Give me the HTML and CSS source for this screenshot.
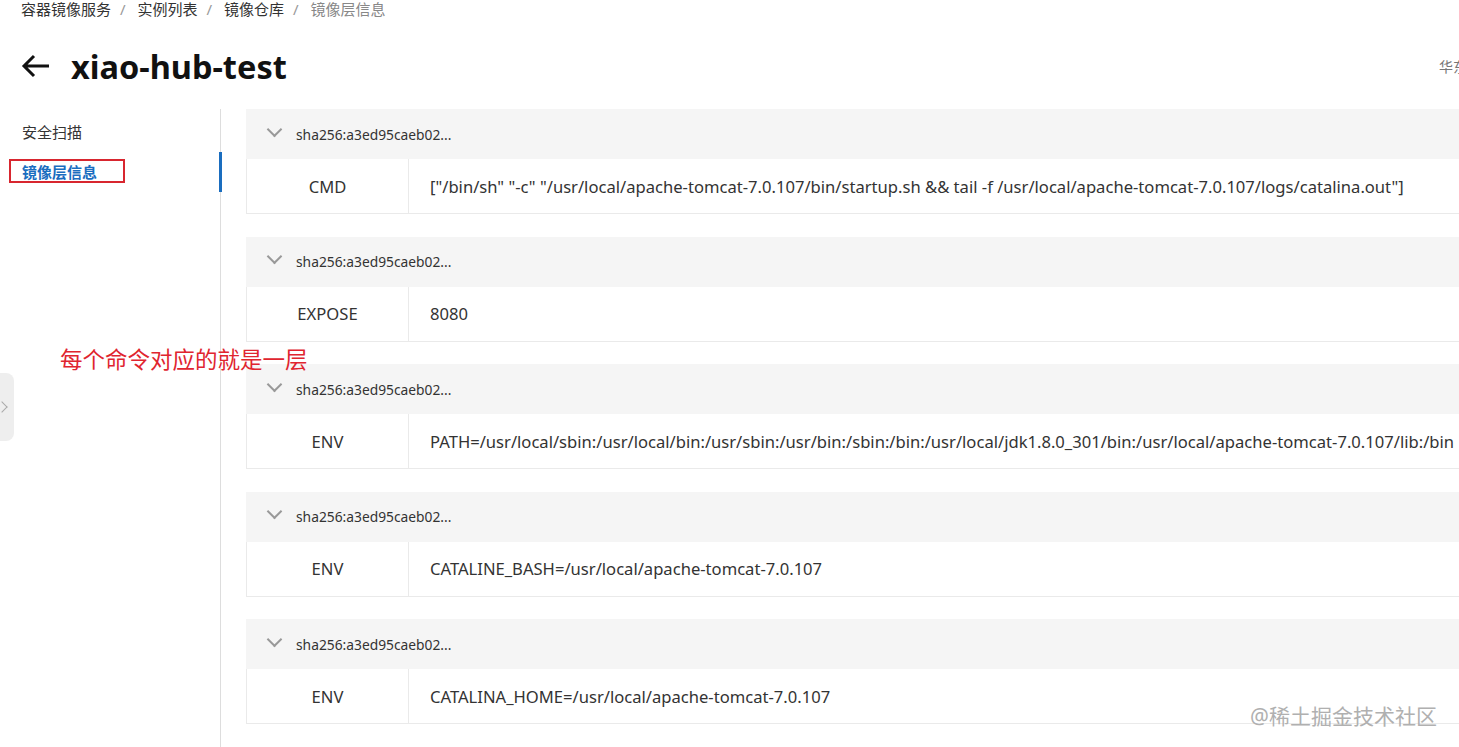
FILE: index.html
```html
<!DOCTYPE html>
<html>
<head>
  <title>镜像层信息</title>
  <link rel="stylesheet" href="styles.css">
</head>
<body>
  <div class="page">
    <div class="breadcrumb">
      <span>容器镜像服务</span><span class="sep">/</span>
      <span>实例列表</span><span class="sep">/</span>
      <span>镜像仓库</span><span class="sep">/</span>
      <span class="current">镜像层信息</span>
    </div>

    <div class="title-row">
      <svg class="back" width="30" height="24" viewBox="0 0 30 24">
        <path d="M28 12H3M13 2L3 12l10 10" fill="none" stroke="#111" stroke-width="3"/>
      </svg>
      <h1>xiao-hub-test</h1>
      <span class="region">华东</span>
    </div>

    <div class="layout">
      <div class="sidebar">
        <div class="nav-item">安全扫描</div>
        <div class="nav-item active"><span class="mark">镜像层信息</span></div>
      </div>

      <div class="content">
        <div class="layer">
          <div class="layer-head"><span class="chev"></span>sha256:a3ed95caeb02...</div>
          <div class="layer-row">
            <div class="key">CMD</div>
            <div class="val">["/bin/sh" "-c" "/usr/local/apache-tomcat-7.0.107/bin/startup.sh &amp;&amp; tail -f /usr/local/apache-tomcat-7.0.107/logs/catalina.out"]</div>
          </div>
        </div>
        <div class="layer">
          <div class="layer-head"><span class="chev"></span>sha256:a3ed95caeb02...</div>
          <div class="layer-row">
            <div class="key">EXPOSE</div>
            <div class="val">8080</div>
          </div>
        </div>
        <div class="layer">
          <div class="layer-head"><span class="chev"></span>sha256:a3ed95caeb02...</div>
          <div class="layer-row">
            <div class="key">ENV</div>
            <div class="val">PATH=/usr/local/sbin:/usr/local/bin:/usr/sbin:/usr/bin:/sbin:/bin:/usr/local/jdk1.8.0_301/bin:/usr/local/apache-tomcat-7.0.107/lib:/bin</div>
          </div>
        </div>
        <div class="layer">
          <div class="layer-head"><span class="chev"></span>sha256:a3ed95caeb02...</div>
          <div class="layer-row">
            <div class="key">ENV</div>
            <div class="val">CATALINE_BASH=/usr/local/apache-tomcat-7.0.107</div>
          </div>
        </div>
        <div class="layer">
          <div class="layer-head"><span class="chev"></span>sha256:a3ed95caeb02...</div>
          <div class="layer-row">
            <div class="key">ENV</div>
            <div class="val">CATALINA_HOME=/usr/local/apache-tomcat-7.0.107</div>
          </div>
        </div>
        <div class="layer">
          <div class="layer-head"><span class="chev"></span>sha256:a3ed95caeb02...</div>
        </div>
      </div>
    </div>
  </div>

  <div class="note">每个命令对应的就是一层</div>
  <div class="side-tab"><span></span></div>
  <div class="watermark">@稀土掘金技术社区</div>
</body>
</html>
```

FILE: styles.css
```css
html, body {
  margin: 0;
  padding: 0;
  height: 100%;
  overflow: hidden;
  background: #fff;
}

body {
  font-family: "Noto Sans", "Noto Sans CJK SC", sans-serif;
  color: #333;
}

.page {
  width: 1560px;
}

.breadcrumb {
  padding-left: 21px;
  font-size: 15px;
  line-height: 18px;
  color: #333;
}

.breadcrumb .sep {
  color: #999;
  margin: 0 8px 0 9px;
}

.breadcrumb .current {
  color: #888;
}

.title-row {
  display: flex;
  align-items: center;
  height: 80px;
  padding-top: 8px;
  padding-left: 21px;
  width: 1438px;
}

.back {
  margin-right: 20px;
}

.title-row h1 {
  margin: 0;
  font-size: 32.5px;
  font-weight: 700;
  color: #111;
  flex: 1;
}

.region {
  font-size: 14px;
  color: #777;
  margin-right: -8px;
}

.layout {
  display: flex;
  margin-top: 3px;
}

.sidebar {
  width: 221px;
  border-right: 1px solid #ddd;
  min-height: 700px;
  padding-top: 3px;
  box-sizing: border-box;
}

.nav-item {
  position: relative;
  font-size: 15px;
  line-height: 40px;
  padding-left: 22px;
}

.nav-item.active {
  color: #1a6dbf;
  font-weight: 700;
}

.nav-item.active::after {
  content: "";
  position: absolute;
  right: -2px;
  top: 0;
  width: 3px;
  height: 40px;
  background: #1a6dbf;
}

.mark {
  position: relative;
}

.mark::before {
  content: "";
  position: absolute;
  left: -13px;
  top: -3px;
  width: 112px;
  height: 20px;
  border: 2px solid #d8262f;
}

.content {
  margin-left: 25px;
  flex: 1;
}

.layer {
  margin-bottom: 22.5px;
}

.layer-head {
  display: flex;
  align-items: center;
  height: 50px;
  background: #f5f5f5;
  font-size: 13.8px;
  color: #333;
  padding-left: 20px;
}

.chev {
  width: 9px;
  height: 9px;
  border-right: 2px solid #999;
  border-bottom: 2px solid #999;
  transform: rotate(45deg);
  margin: -10px 16px 0 3px;
}

.layer-row {
  display: flex;
  height: 54px;
  border-left: 1px solid #eaeaea;
  border-bottom: 1px solid #eaeaea;
  font-size: 16.6px;
  color: #333;
}

.key {
  width: 161px;
  border-right: 1px solid #eaeaea;
  display: flex;
  align-items: center;
  justify-content: center;
}

.val {
  display: flex;
  align-items: center;
  padding-left: 21px;
  white-space: nowrap;
}

.note {
  position: absolute;
  left: 60px;
  top: 342px;
  font-size: 22.5px;
  color: #e0252f;
}

.side-tab {
  position: absolute;
  left: 0;
  top: 373px;
  width: 14px;
  height: 68px;
  background: #eee;
  border-radius: 0 8px 8px 0;
}

.side-tab span {
  position: absolute;
  left: -2px;
  top: 30px;
  width: 7px;
  height: 7px;
  border-right: 1.5px solid #aaa;
  border-top: 1.5px solid #aaa;
  transform: rotate(45deg);
}

.watermark {
  position: absolute;
  left: 1250px;
  top: 700px;
  font-size: 21px;
  color: #b0b0b0;
}
```
